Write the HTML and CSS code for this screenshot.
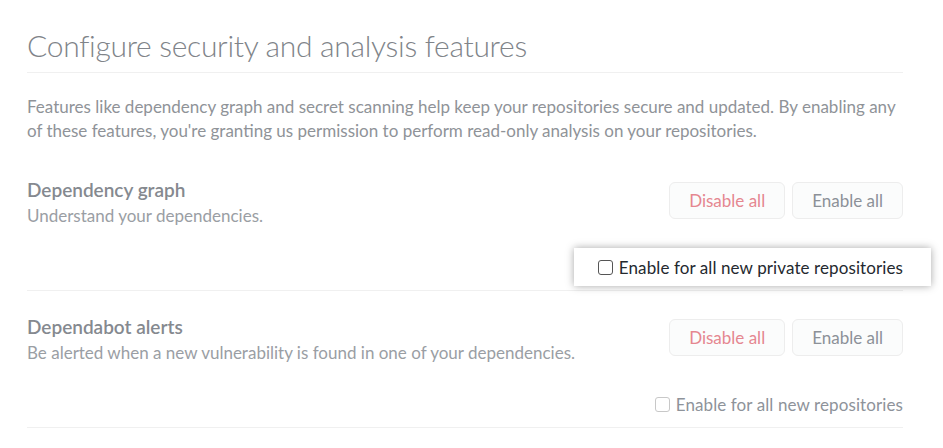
FILE: index.html
```html
<!DOCTYPE html>
<html lang="en">
<head>
<meta charset="utf-8">
<title>Configure security and analysis features</title>
<link rel="stylesheet" href="styles.css">
</head>
<body>
<main class="page">
  <h2 class="page-title">Configure security and analysis features</h2>
  <p class="intro">Features like dependency graph and secret scanning help keep your repositories secure and updated. By enabling any of these features, you're granting us permission to perform read-only analysis on your repositories.</p>

  <section class="feature">
    <div class="feature-row">
      <div class="feature-info">
        <h3 class="feature-name">Dependency graph</h3>
        <p class="feature-desc">Understand your dependencies.</p>
      </div>
      <div class="feature-actions">
        <button class="btn btn-danger" type="button">Disable all</button>
        <button class="btn" type="button">Enable all</button>
      </div>
    </div>
    <div class="feature-option">
      <label class="option option-highlight"><input class="check" type="checkbox">Enable for all new private repositories</label>
    </div>
  </section>

  <section class="feature">
    <div class="feature-row">
      <div class="feature-info">
        <h3 class="feature-name">Dependabot alerts</h3>
        <p class="feature-desc">Be alerted when a new vulnerability is found in one of your dependencies.</p>
      </div>
      <div class="feature-actions">
        <button class="btn btn-danger" type="button">Disable all</button>
        <button class="btn" type="button">Enable all</button>
      </div>
    </div>
    <div class="feature-option">
      <label class="option"><input class="check" type="checkbox">Enable for all new repositories</label>
    </div>
  </section>
</main>
</body>
</html>
```

FILE: styles.css
```css
html, body {
  margin: 0;
  padding: 0;
  background: #ffffff;
}

body {
  font-family: "Lato", "Open Sans", "Liberation Sans", sans-serif;
  color: #8e9298;
}

.page {
  width: 876px;
  margin-left: 27px;
}

.page-title {
  margin: 25px 0 0;
  padding-bottom: 7px;
  font-size: 30px;
  line-height: 40px;
  font-weight: 300;
  letter-spacing: -0.3px;
  color: #808489;
  border-bottom: 1px solid #f0f0f0;
}

.intro {
  margin: 22px 0 11px;
  font-size: 17px;
  line-height: 24px;
  color: #8f9398;
}

.feature {
  padding: 24px 0 4px;
  border-bottom: 1px solid #f0f0f0;
}

.feature-row {
  display: flex;
  justify-content: space-between;
  align-items: flex-start;
}

.feature-name {
  margin: 0;
  font-size: 19px;
  line-height: 24px;
  font-weight: 600;
  color: #85898f;
}

.feature-desc {
  margin: 2px 0 0;
  font-size: 17px;
  line-height: 24px;
  color: #9a9ea4;
}

.feature-actions {
  display: flex;
  gap: 7px;
  margin-top: 4px;
}

.btn {
  height: 37px;
  padding: 0 19px;
  font-family: inherit;
  font-size: 17px;
  color: #8c9198;
  background: #fbfcfc;
  border: 1px solid #ededed;
  border-radius: 6px;
}

.btn-danger {
  color: #e58790;
}

.feature-option {
  display: flex;
  justify-content: flex-end;
  margin-top: 20px;
}

.option {
  display: inline-flex;
  align-items: center;
  gap: 6px;
  height: 38px;
  font-size: 17px;
  letter-spacing: 0.1px;
  color: #8e939a;
}

.option-highlight {
  padding: 0 28px 0 24px;
  margin-right: -28px;
  color: #24292f;
  background: #ffffff;
  box-shadow: 0 0 8px rgba(0, 0, 0, 0.35);
}

.check {
  appearance: none;
  -webkit-appearance: none;
  width: 15px;
  height: 15px;
  margin: 0;
  border: 1px solid #c8c8c8;
  border-radius: 3px;
  background: #ffffff;
}

.option-highlight .check {
  border-color: #555555;
}
```
